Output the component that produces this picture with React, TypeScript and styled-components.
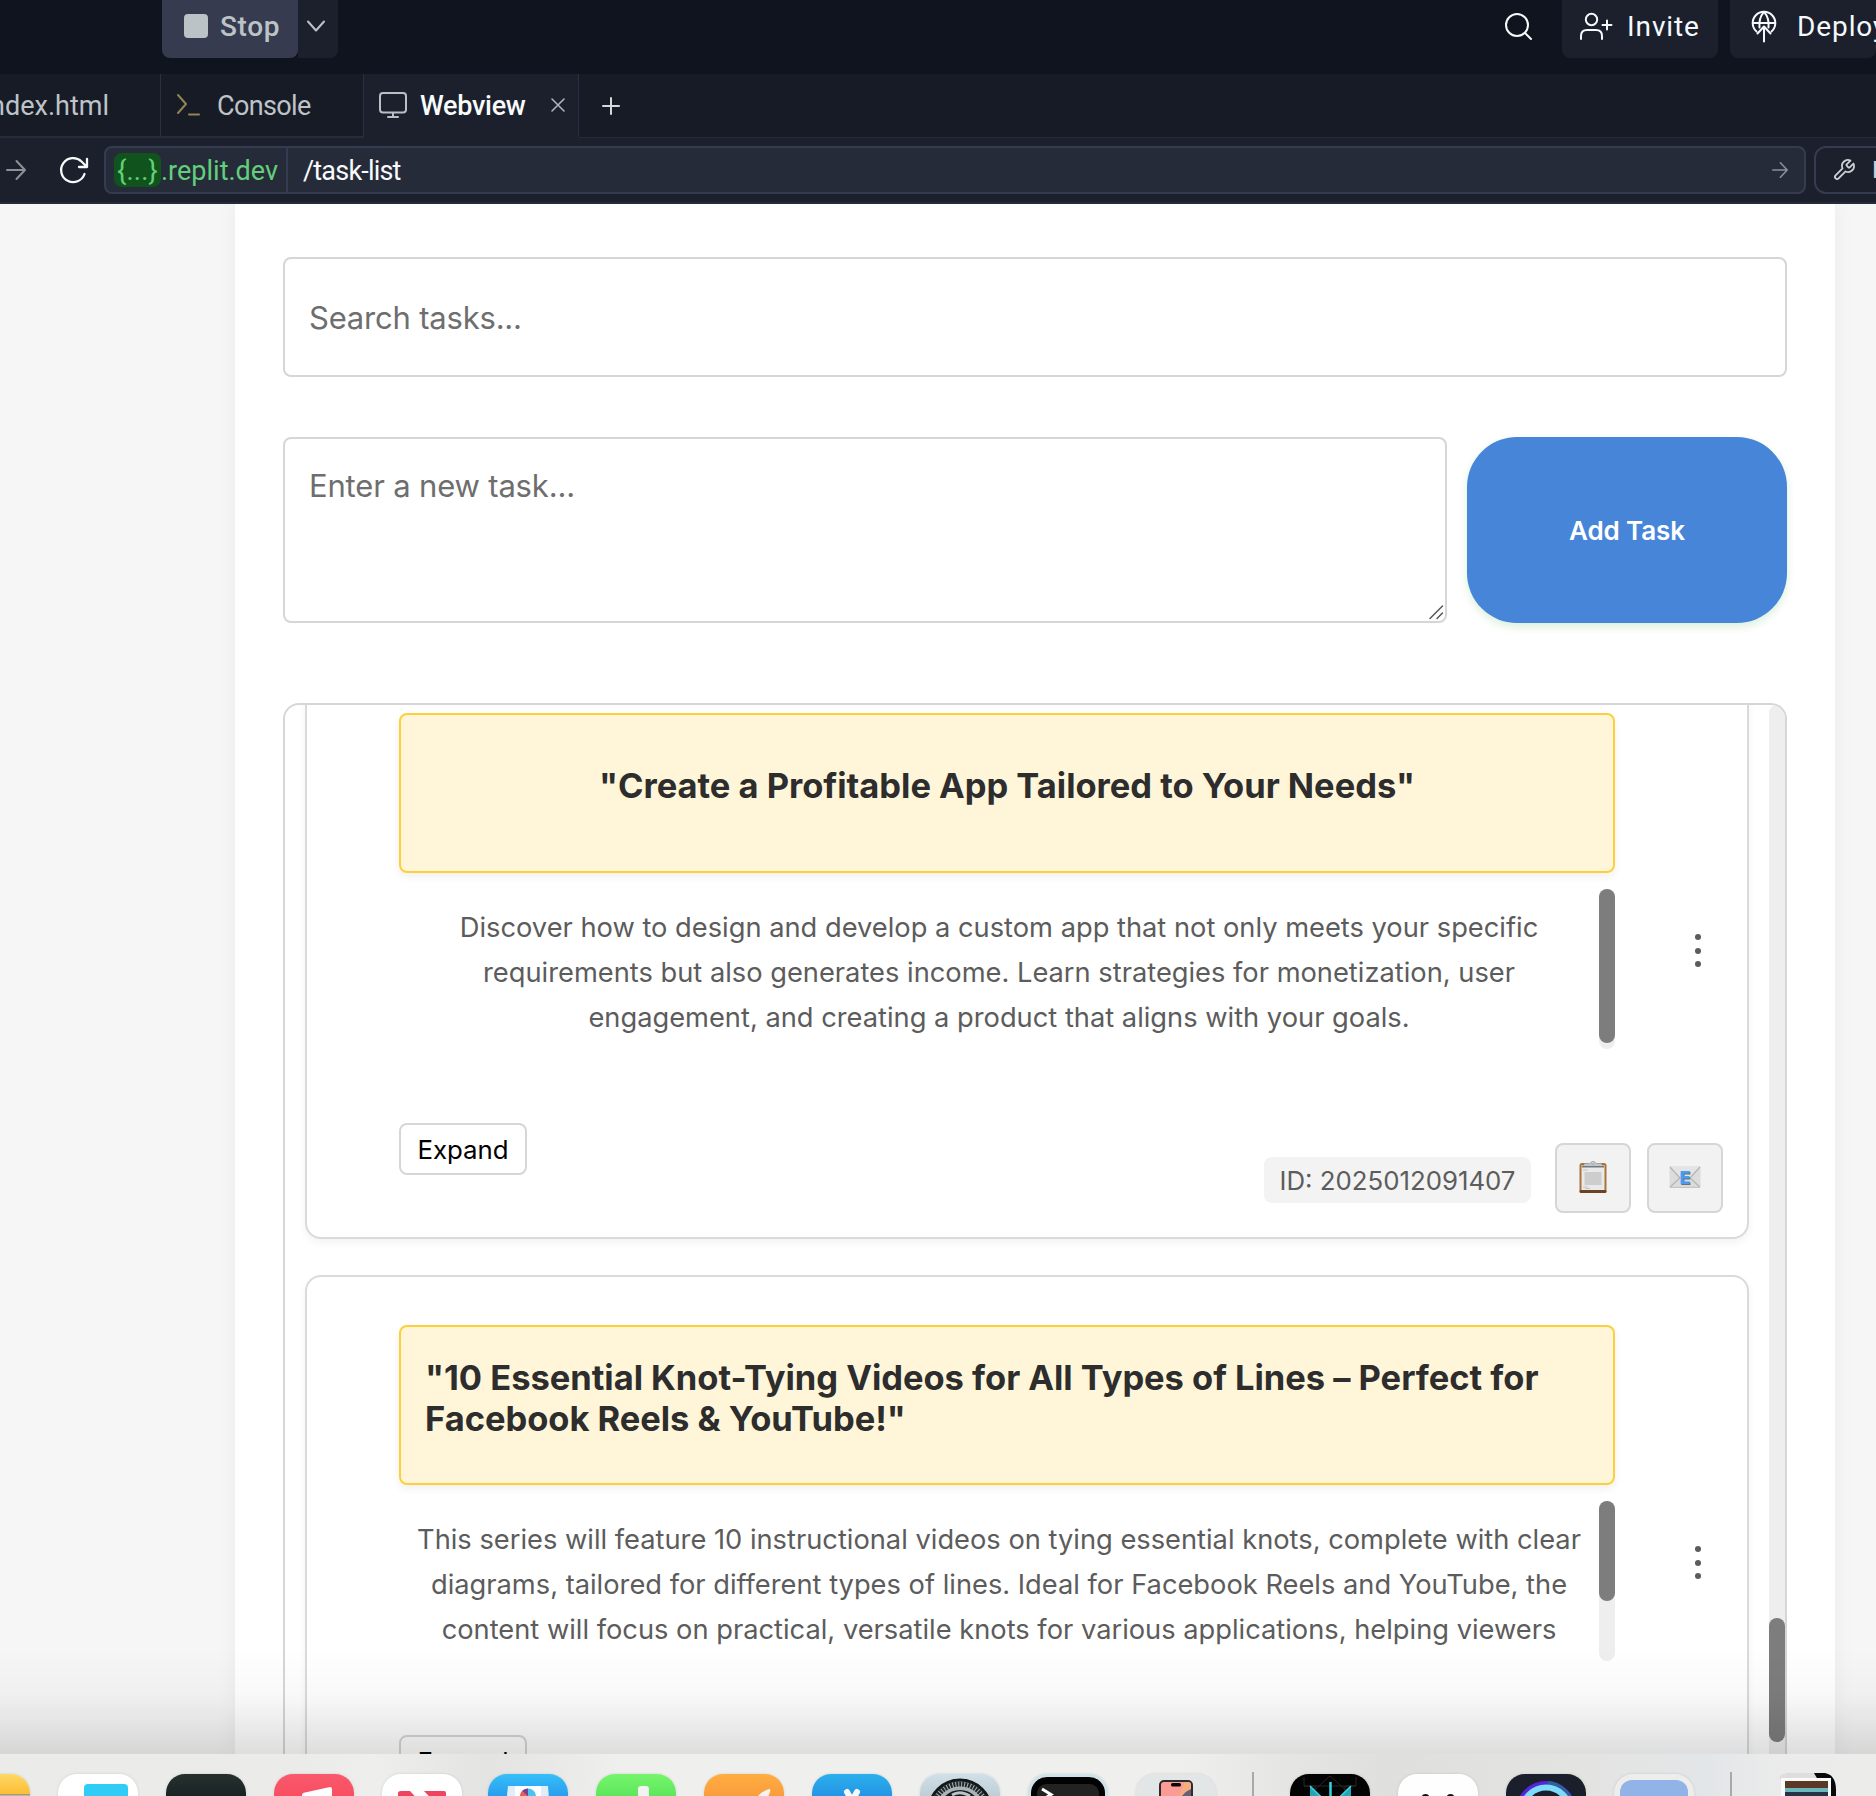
import React from 'react';
import styled, { createGlobalStyle } from 'styled-components';

const ui = '"Inter", "Liberation Sans", sans-serif';
const chrome = '"Roboto", "Noto Sans", sans-serif';

const GlobalStyle = createGlobalStyle`
  * { box-sizing: border-box; }
  body { margin: 0; background: #f6f6f6; overflow: hidden; }
  button, input, textarea { font: inherit; margin: 0; }
  svg { display: block; flex: none; overflow: visible; }
`;

const Screen = styled.div`
  width: 1876px;
  height: 1796px;
  display: flex;
  flex-direction: column;
  overflow: hidden;
  font-family: ${ui};
`;

/* ---------- workspace header ---------- */

const TopBar = styled.header`
  flex: none;
  height: 74px;
  padding-left: 162px;
  display: flex;
  align-items: flex-start;
  background: #10141e;
  color: #f5f9fc;
  font: 400 28px ${chrome};
`;

const StopButton = styled.div`
  width: 136px;
  height: 58px;
  padding: 0 0 6px 22px;
  display: flex;
  align-items: center;
  gap: 12px;
  border-radius: 0 0 8px 8px;
  background: #363b50;
  color: #bcc3c7;
  font-weight: 500;
  letter-spacing: 0.6px;
`;

const StopSquare = styled.span`
  width: 24px;
  height: 24px;
  border-radius: 4px;
  background: #bcc3c7;
`;

const StopMenu = styled.div`
  width: 40px;
  height: 58px;
  padding: 0 0 6px 9px;
  display: flex;
  align-items: center;
  border-radius: 0 0 8px 0;
  background: #1c202c;
  color: #bcc3c7;
`;

const TopActions = styled.div`
  margin-left: auto;
  display: flex;
  gap: 12px;
`;

const SearchAction = styled.div`
  width: 46px;
  height: 52px;
  display: flex;
  align-items: center;
  margin-right: -1px;
`;

const ActionButton = styled.div<{ $width: number }>`
  width: ${(p) => p.$width}px;
  height: 58px;
  padding: 0 0 6px 18px;
  display: flex;
  align-items: center;
  border-radius: 0 0 8px 8px;
  background: #1c202c;
  white-space: nowrap;
  letter-spacing: 0.9px;
`;

const ActionLabel = styled.span<{ $gap: number }>`
  margin-left: ${(p) => p.$gap}px;
`;

const TabStrip = styled.nav`
  flex: none;
  height: 64px;
  display: flex;
  background: #171b26;
  color: #bec3c8;
  font: 400 27px ${chrome};
`;

const Tab = styled.div<{ $width: number; $active?: boolean }>`
  flex: none;
  width: ${(p) => p.$width}px;
  display: flex;
  align-items: center;
  padding-left: 15px;
  border-right: 1px solid #2b3040;
  border-bottom: 2px solid ${(p) => (p.$active ? '#1c202c' : '#262b3a')};
  background: ${(p) => (p.$active ? '#1c202c' : 'transparent')};
  color: ${(p) => (p.$active ? '#f8fafc' : 'inherit')};
`;

const FileTab = styled(Tab)`
  justify-content: flex-end;
  padding: 0 51px 0 0;
`;

const TabLabel = styled.span<{ $spacing?: number; $left?: number; $strong?: boolean }>`
  padding-top: 1px;
  letter-spacing: ${(p) => p.$spacing ?? 0}px;
  margin-left: ${(p) => p.$left ?? 0}px;
  font-weight: ${(p) => (p.$strong ? 500 : 400)};
`;

const CloseSlot = styled.span`
  margin-left: auto;
  padding-right: 13px;
`;

const TabRest = styled.div`
  flex: 1;
  display: flex;
  align-items: center;
  padding-left: 23px;
  border-bottom: 1px solid #262b3a;
`;

const AddressBar = styled.div`
  flex: none;
  height: 66px;
  padding-left: 6px;
  display: flex;
  align-items: center;
  border-bottom: 2px solid #262b3a;
  background: #1c202c;
  font: 400 27px ${chrome};
  color: #f8fafc;
`;

const ReloadSlot = styled.div`
  flex: none;
  width: 45px;
  margin-left: 33px;
`;

const UrlField = styled.div`
  flex: none;
  width: 1702px;
  height: 48px;
  display: flex;
  align-items: center;
  border: 2px solid #353b50;
  border-radius: 8px;
  background: #262b39;
  padding: 0 16px 0 8px;
`;

const HostBadge = styled.span`
  width: 47px;
  height: 34px;
  padding-top: 1px;
  display: grid;
  place-items: center;
  border-radius: 8px;
  background: #11531c;
  color: #62cf7a;
  letter-spacing: 0.2px;
`;

const HostName = styled.span`
  width: 127px;
  padding-top: 2px;
  align-self: stretch;
  display: flex;
  align-items: center;
  border-right: 2px solid #353b50;
  color: #62cf7a;
`;

const UrlPath = styled.span`
  flex: 1;
  padding: 2px 0 0 15px;
  letter-spacing: -0.8px;
`;

const DevtoolsButton = styled.div`
  flex: none;
  width: 200px;
  height: 48px;
  margin-left: 8px;
  padding-left: 17px;
  display: flex;
  align-items: center;
  gap: 17px;
  border: 2px solid #353b50;
  border-radius: 12px;
  color: #cdd1d5;
  font-size: 24px;
`;

/* ---------- web page ---------- */

const Viewport = styled.div`
  flex: 1;
  min-height: 0;
  padding: 0 41px 0 235px;
  overflow: hidden;
  position: relative;
`;

const DockShade = styled.div`
  position: absolute;
  left: 0;
  right: 0;
  bottom: 0;
  height: 106px;
  border-bottom: 1px solid rgba(0, 0, 0, 0.12);
  background: linear-gradient(rgba(0, 0, 0, 0), rgba(0, 0, 0, 0.025) 45%, rgba(0, 0, 0, 0.13));
`;

const Container = styled.main`
  height: 1600px;
  padding: 53px 48px 0;
  background: #fff;
  box-shadow: 0 0 20px rgba(0, 0, 0, 0.05);
`;

const SearchInput = styled.input`
  display: block;
  width: 100%;
  height: 120px;
  padding: 0 24px;
  border: 2px solid #d6d6d6;
  border-radius: 8px;
  background: #fff;
  font-size: 31px;
  letter-spacing: -0.2px;
  outline: none;
  &::placeholder { color: #6e6e6e; }
`;

const NewTaskRow = styled.div`
  display: flex;
  gap: 20px;
  margin: 60px 0 80px;
`;

const TaskField = styled.label`
  flex: 1;
  height: 186px;
  display: flex;
  align-items: flex-end;
  border: 2px solid #d6d6d6;
  border-radius: 8px;
  background: #fff;
`;

const TaskTextarea = styled.textarea`
  flex: 1;
  height: 100%;
  padding: 28px 0 0 24px;
  border: 0;
  background: transparent;
  font-size: 31px;
  letter-spacing: -0.17px;
  line-height: 38px;
  resize: none;
  outline: none;
  &::placeholder { color: #6e6e6e; }
`;

const GripSlot = styled.span`
  margin: 0 2px 2px 0;
`;

const AddButton = styled.button`
  width: 320px;
  height: 186px;
  border: 0;
  border-radius: 50px;
  background: #4785d9;
  color: #fff;
  font-size: 26px;
  font-weight: 600;
  letter-spacing: -0.1px;
  box-shadow: 0 4px 8px rgba(76, 175, 80, 0.2);
`;

const TaskList = styled.section`
  height: 1200px;
  display: flex;
  border: 2px solid #d6d6d6;
  border-radius: 16px;
  overflow: hidden;
`;

const Cards = styled.div`
  flex: 1;
  padding: 0 20px;
  margin-top: -42px;
  display: flex;
  flex-direction: column;
  gap: 36px;
`;

const Track = styled.div<{ $height: number }>`
  flex: none;
  width: 16px;
  height: ${(p) => p.$height}px;
  border-radius: 8px;
  background: #eeeeee;
`;

const Thumb = styled.div<{ $top?: number; $height: number }>`
  height: ${(p) => p.$height}px;
  transform: translateY(${(p) => p.$top ?? 0}px);
  border-radius: 8px;
  background: #7d7d7d;
`;

const Card = styled.article`
  flex: none;
  height: 576px;
  padding: 48px 24px 24px 92px;
  border: 2px solid #dadada;
  border-radius: 16px;
  background: #fff;
  box-shadow: 0 4px 8px rgba(0, 0, 0, 0.05);
`;

const CardBody = styled.div`
  display: flex;
`;

const CardMain = styled.div`
  width: 1216px;
`;

const Title = styled.h3<{ $centered?: boolean }>`
  height: 160px;
  margin: 0 0 16px;
  padding: 0 24px 15px;
  display: flex;
  align-items: center;
  justify-content: ${(p) => (p.$centered ? 'center' : 'flex-start')};
  border: 2px solid #fdd03b;
  border-radius: 8px;
  background: #fff6da;
  box-shadow: 0 4px 8px rgba(0, 0, 0, 0.06);
  color: #2d2d2d;
  font-size: 34.5px;
  font-weight: 700;
  line-height: 41px;
  letter-spacing: -0.03px;
`;

const Description = styled.div`
  display: flex;
  height: 160px;
`;

const DescriptionText = styled.div`
  flex: 1;
  padding-top: 17px;
  overflow: hidden;
`;

const Line = styled.p`
  margin: 0;
  color: #5c5c5c;
  font-size: 27.28px;
  line-height: 44.8px;
  text-align: center;
  white-space: nowrap;
`;

const MenuButton = styled.div`
  width: 41px;
  margin: 221px 0 0 62px;
  height: 33px;
  display: flex;
  flex-direction: column;
  align-items: center;
  justify-content: space-between;
`;

const Dot = styled.span`
  width: 6px;
  height: 6px;
  border-radius: 50%;
  background: #5c5c5c;
`;

const CardFooter = styled.footer`
  margin-top: 74px;
  display: flex;
  align-items: flex-end;
  height: 90px;
`;

const ExpandButton = styled.button`
  align-self: flex-start;
  width: 128px;
  height: 52px;
  padding: 0;
  border: 2px solid #d6d6d6;
  border-radius: 8px;
  background: #fff;
  color: #000;
  font-size: 25.8px;
`;

const TaskId = styled.span`
  width: 267px;
  height: 46px;
  margin: 0 24px 10px auto;
  display: grid;
  place-items: center;
  border-radius: 8px;
  background: #f3f3f3;
  color: #5c5c5c;
  font-size: 25.8px;
`;

const IconButton = styled.button`
  width: 76px;
  height: 70px;
  padding: 0 0 2px;
  display: grid;
  place-items: center;
  border: 2px solid #d6d6d6;
  border-radius: 8px;
  background: #f2f2f2;
  & + & { margin-left: 16px; }
`;

/* ---------- dock ---------- */

const DockBar = styled.footer`
  flex: none;
  height: 42px;
  padding: 20px 0 0;
  display: flex;
  gap: 28px;
  overflow: hidden;
  background: linear-gradient(90deg, #ebebea 0, #ebebea 16%, #eeeeec 20%, #e3e3e1 26%, #efefed 33%, #efefed 63%, #e6e6e5 68%, #dfdfdd 74%, #e3e3e1 84%, #e3e6e8 91%, #ebebeb 95%, #ececeb);
`;

const DockIcon = styled.div<{ $bg: string; $shift?: number }>`
  flex: none;
  width: 80px;
  height: 80px;
  margin-left: ${(p) => p.$shift ?? 0}px;
  border-radius: 19px;
  background: ${(p) => p.$bg};
  box-shadow: 0 0 3px rgba(0, 0, 0, 0.12);
`;

const DockDivider = styled.div`
  flex: none;
  width: 2px;
  height: 60px;
  margin: -2px 8px 0;
  background: #a9a9a9;
`;

const StackSlot = styled.div`
  flex: none;
  margin: -2px 0 0 10px;
`;

const Stroke = ({ w, h, sw = 2, color = 'currentColor', children }: { w: number; h: number; sw?: number; color?: string; children: React.ReactNode }) => (
  <svg width={w} height={h} viewBox={`0 0 ${w} ${h}`} fill="none" stroke={color} strokeWidth={sw} strokeLinecap="round" strokeLinejoin="round">
    {children}
  </svg>
);

const ArrowRight = ({ size, color }: { size: number; color: string }) => (
  <svg width={size} height={size} viewBox="0 0 20 20" fill="none" stroke={color} strokeWidth="2" strokeLinecap="round" strokeLinejoin="round">
    <path d="M1 10H19M10.5 1L19 10L10.5 19" />
  </svg>
);

const ClipboardIcon = () => (
  <svg width="28" height="34" viewBox="0 0 28 34">
    <rect x="0.5" y="3" width="27" height="30" rx="2.5" fill="#a8743a" />
    <rect x="0.5" y="30" width="27" height="3" rx="1.5" fill="#6d4222" />
    <path d="M2.500 5H25.500V30H2.500Z" fill="#e9e9e9" />
    <path d="M3 5.500H25V7.500H3Z" fill="#77797c" />
    <rect x="5.500" y="12" width="17" height="13" fill="#cdcdcd" />
    <path d="M4 10H9M4 27H9M6 28.500H11" stroke="#c6c6c6" strokeWidth="1" />
    <path d="M5 6V4.500Q5 3.500 6.500 3.500H10Q11 1 14 1Q17 1 18 3.500H21.500Q23 3.500 23 4.500V6Z" fill="#bcc4cc" />
    <circle cx="14" cy="2.800" r="1.300" fill="#f2f2f2" stroke="#8f979f" strokeWidth="0.800" />
  </svg>
);

const MailIcon = () => (
  <svg width="32" height="22" viewBox="0 0 32 22">
    <rect x="0.5" y="0.5" width="31" height="21" rx="1" fill="#dcdcdc" />
    <path d="M0.500 0.500H31.500L18 14H14Z" fill="#e4e4e4" />
    <path d="M1 1L11 12L1 21M31 1L21 12L31 21" fill="none" stroke="#b4b4b4" strokeWidth="1.200" />
    <path d="M1 21.300H31" stroke="#bdbdbd" strokeWidth="1" />
    <text x="16.700" y="18.600" textAnchor="middle" fontFamily="Inter, sans-serif" fontWeight="800" fontSize="18" fill="#6f6f6f">E</text>
    <text x="15.900" y="17.600" textAnchor="middle" fontFamily="Inter, sans-serif" fontWeight="800" fontSize="18" fill="#4a9bf2">E</text>
  </svg>
);

type Task = { title: string[]; centered?: boolean; lines: string[]; id: string; thumb: number };

const tasks: Task[] = [
  {
    title: ['"Create a Profitable App Tailored to Your Needs"'],
    centered: true,
    lines: [
      'Discover how to design and develop a custom app that not only meets your specific',
      'requirements but also generates income. Learn strategies for monetization, user',
      'engagement, and creating a product that aligns with your goals.',
    ],
    id: '2025012091407',
    thumb: 154,
  },
  {
    title: ['"10 Essential Knot-Tying Videos for All Types of Lines – Perfect for', 'Facebook Reels & YouTube!"'],
    lines: [
      'This series will feature 10 instructional videos on tying essential knots, complete with clear',
      'diagrams, tailored for different types of lines. Ideal for Facebook Reels and YouTube, the',
      'content will focus on practical, versatile knots for various applications, helping viewers',
    ],
    id: '',
    thumb: 100,
  },
];

const TaskCard = ({ task }: { task: Task }) => (
  <Card>
    <CardBody>
      <CardMain>
        <Title $centered={task.centered}>
          <span>
            {task.title.map((t, i) => (
              <React.Fragment key={t}>{i > 0 && <br />}{t}</React.Fragment>
            ))}
          </span>
        </Title>
        <Description>
          <DescriptionText>
            {task.lines.map((l) => <Line key={l}>{l}</Line>)}
          </DescriptionText>
          <Track $height={160}><Thumb $height={task.thumb} /></Track>
        </Description>
      </CardMain>
      <MenuButton><Dot /><Dot /><Dot /></MenuButton>
    </CardBody>
    <CardFooter>
      <ExpandButton>Expand</ExpandButton>
      {task.id && (
        <>
          <TaskId>ID: {task.id}</TaskId>
          <IconButton><ClipboardIcon /></IconButton>
          <IconButton><MailIcon /></IconButton>
        </>
      )}
    </CardFooter>
  </Card>
);

const Header = () => (
  <TopBar>
    <StopButton>
      <StopSquare />
      Stop
    </StopButton>
    <StopMenu>
      <Stroke w={18} h={10}><path d="M1 0.500L9 9.500L17 0.500" /></Stroke>
    </StopMenu>
    <TopActions>
      <SearchAction>
        <Stroke w={27} h={27}>
          <circle cx="12" cy="12" r="11" /><path d="M20 20L26 26" />
        </Stroke>
      </SearchAction>
      <ActionButton $width={156}>
        <Stroke w={32} h={27}>
          <circle cx="11.500" cy="6.500" r="5.700" />
          <path d="M1 26V23Q1 17 7 17H16Q22 17 22 23V26M27 7.500V16.500M22.500 12H31.500" />
        </Stroke>
        <ActionLabel $gap={15}>Invite</ActionLabel>
      </ActionButton>
      <ActionButton $width={146}>
        <Stroke w={32} h={32}>
          <path d="M8.500 21.500A11.300 11.300 0 1 1 23.500 21.500" />
          <path d="M5 13H27M11.500 17.500Q10.500 8 16 1.800Q21.500 8 20.500 17.500" />
          <path d="M16 31.500V17M9.500 23.500L16 16.500L22.500 23.500" />
        </Stroke>
        <ActionLabel $gap={17}>Deploy</ActionLabel>
      </ActionButton>
    </TopActions>
  </TopBar>
);

const Tabs = () => (
  <TabStrip>
    <FileTab $width={161}><TabLabel>index.html</TabLabel></FileTab>
    <Tab $width={203}>
      <Stroke w={24} h={22} color="#948450"><path d="M2 1L10 10L2 19M13 20.500H23" /></Stroke>
      <TabLabel $left={17} $spacing={-0.65}>Console</TabLabel>
    </Tab>
    <Tab $width={215} $active>
      <Stroke w={28} h={26} color="#b9bfc4">
        <rect x="1" y="1" width="26" height="19.500" rx="3" /><path d="M14 21V25M9 25H19" />
      </Stroke>
      <TabLabel $left={13} $spacing={-0.3} $strong>Webview</TabLabel>
      <CloseSlot>
        <Stroke w={14} h={14} color="#aeb3b9" sw={1.6}><path d="M1 1L13 13M13 1L1 13" /></Stroke>
      </CloseSlot>
    </Tab>
    <TabRest>
      <Stroke w={18} h={18} color="#d5d9dc"><path d="M9 1V17M1 9H17" /></Stroke>
    </TabRest>
  </TabStrip>
);

const Address = () => (
  <AddressBar>
    <ArrowRight size={20} color="#8d9096" />
    <ReloadSlot>
      <Stroke w={29} h={26} sw={2.3}>
        <path d="M25.500 17A12 12 0 1 1 22.500 4.500L28 10M28 2V10H20" />
      </Stroke>
    </ReloadSlot>
    <UrlField>
      <HostBadge>{'{...}'}</HostBadge>
      <HostName>.replit.dev</HostName>
      <UrlPath>/task-list</UrlPath>
      <ArrowRight size={16} color="#8d9096" />
    </UrlField>
    <DevtoolsButton>
      <svg width="22" height="22" viewBox="1 1 22 22" fill="none" stroke="currentColor" strokeWidth="1.800" strokeLinecap="round" strokeLinejoin="round">
        <path d="M14.700 6.300a1 1 0 0 0 0 1.400l1.600 1.600a1 1 0 0 0 1.400 0l3.770-3.770a6 6 0 0 1-7.940 7.940l-6.910 6.910a2.120 2.120 0 0 1-3-3l6.910-6.910a6 6 0 0 1 7.940-7.940l-3.760 3.760z" />
      </svg>
      Devtools
    </DevtoolsButton>
  </AddressBar>
);

const Dock = () => (
  <DockBar>
    <DockIcon $shift={-50} $bg="linear-gradient(#fdd964 0, #fcbd35 20px, #9b8b70 20px, #c9c1ae 22px, #fff 23px)" />
    <DockIcon $bg="#fff">
      <svg width="80" height="80"><rect x="26" y="10" width="44" height="40" rx="4" fill="#2fcdf6" /></svg>
    </DockIcon>
    <DockIcon $bg="linear-gradient(#26312e, #192123 24px)" />
    <DockIcon $bg="linear-gradient(#f9596c, #f94459 40px)">
      <svg width="80" height="80"><path d="M28 21Q28 19 31 18.500L56 13Q58 13 58 15V50H28Z" fill="#fff" /></svg>
    </DockIcon>
    <DockIcon $bg="#fff">
      <svg width="80" height="80" fill="#f0435f"><path d="M16 19Q16 17 19 17H28L60 52H16Z" /><path d="M42 17H62Q64 17 64 19V40Z" /></svg>
    </DockIcon>
    <DockIcon $shift={-2} $bg="linear-gradient(#35bff8, #2897ee 26px)">
      <svg width="80" height="80">
        <path d="M20 12H60L63 50H16Z" fill="#dfeefa" />
        <path d="M27 12H53V50H27Z" fill="#fff" />
        <circle cx="40" cy="22.500" r="8" fill="#4ac4ee" />
        <path d="M40 22.500V14.500A8 8 0 0 0 34 17Z" fill="#7b3f8d" />
        <path d="M40 22.500L34 17A8 8 0 0 0 32 22.500Z" fill="#ee5b4d" />
      </svg>
    </DockIcon>
    <DockIcon $bg="linear-gradient(#76f56c, #58e459 26px)">
      <svg width="80" height="80"><rect x="42" y="12" width="11" height="40" rx="3" fill="#f1f4f1" /></svg>
    </DockIcon>
    <DockIcon $bg="linear-gradient(#ffad42, #f99a3b 26px)">
      <svg width="80" height="80"><path d="M50 28Q55 18 65 15Q67 15 66 18Q64 24 59 30Z" fill="#f7f4ef" /></svg>
    </DockIcon>
    <DockIcon $bg="linear-gradient(#2bb0ec, #248fe4 26px)">
      <svg width="80" height="80" stroke="#f4f9fd" strokeWidth="6" strokeLinecap="round"><path d="M35 18L49 43M45 18L31 43" /></svg>
    </DockIcon>
    <DockIcon $bg="linear-gradient(#cfe0e8, #bccbd2 26px)">
      <svg width="80" height="80" fill="none">
        <circle cx="40" cy="37" r="31" fill="#aab4b8" stroke="#15181a" strokeWidth="3" />
        <circle cx="40" cy="37" r="27" stroke="#20272a" strokeWidth="5" strokeDasharray="2 1" />
        <circle cx="40" cy="37" r="21" fill="#15191b" />
        <path d="M32 21Q40 16 50 22" stroke="#b9c5ca" strokeWidth="3" />
      </svg>
    </DockIcon>
    <DockIcon $bg="#cfe3ea">
      <svg width="80" height="80">
        <rect x="3" y="3" width="74" height="74" rx="16" fill="#020202" />
        <rect x="9" y="10" width="62" height="60" rx="9" fill="#222" />
        <path d="M14 15L23 20.500L14 26" fill="none" stroke="#fff" strokeWidth="3" />
      </svg>
    </DockIcon>
    <DockIcon $bg="#e3e6e7">
      <svg width="80" height="80">
        <rect x="23" y="6" width="34" height="66" rx="5" fill="#2e2a2d" />
        <rect x="25" y="8" width="30" height="62" rx="3" fill="#fb9b95" />
        <path d="M49 8H52Q55 8 55 11V19L40 29Z" fill="#f7ae7e" />
        <path d="M55 15Q45 19 41 32H55Z" fill="#675f73" />
        <rect x="35" y="9" width="10" height="3.500" rx="1.500" fill="#080808" />
      </svg>
    </DockIcon>
    <DockDivider />
    <DockIcon $bg="#030303">
      <svg width="80" height="80" fill="none">
        <path d="M14 3V12H66V3M14 12H25V30M66 12H55V30M40 2L22 18M40 2L58 18" stroke="#262626" />
        <path d="M20 12L38 28V40H20ZM61 12L43 28V40H61Z" fill="#25a6b6" />
        <path d="M40.500 8V40" stroke="#35d4e2" strokeWidth="2.500" />
        <path d="M20 12L38 30M61 12L43 30" stroke="#35d4e2" strokeWidth="1.500" />
      </svg>
    </DockIcon>
    <DockIcon $bg="#fefefe">
      <svg width="80" height="80"><circle cx="27.500" cy="24" r="4" fill="#111" /><circle cx="52.500" cy="24" r="4" fill="#111" /></svg>
    </DockIcon>
    <DockIcon $bg="#1b1f2b">
      <svg width="80" height="80" fill="none">
        <circle cx="40" cy="37" r="28" stroke="#5525d8" strokeWidth="4" />
        <path d="M42 9A28 28 0 0 1 67 31" stroke="#315f9e" strokeWidth="4" />
        <circle cx="40" cy="37" r="23.500" stroke="#7ddcfa" strokeWidth="6" />
      </svg>
    </DockIcon>
    <DockIcon $bg="#ededec">
      <svg width="80" height="80"><rect x="6" y="6" width="68" height="68" rx="12" fill="#91b3e8" /></svg>
    </DockIcon>
    <DockDivider />
    <StackSlot>
      <svg width="60" height="60">
        <path d="M10 1H47Q58 3 58 18V50H10Z" fill="#080808" />
        <path d="M2 4Q4 1 12 1H36L40 8H2Z" fill="#dedede" />
        <rect x="3" y="6" width="50" height="50" fill="#fafafa" />
        <rect x="7" y="9" width="43" height="8" fill="#5b3a25" />
        <rect x="7" y="16" width="43" height="4" fill="#6bb7bd" />
        <rect x="7" y="20" width="43" height="30" fill="#293244" />
      </svg>
    </StackSlot>
  </DockBar>
);

export default function App() {
  return (
    <Screen>
      <GlobalStyle />
      <Header />
      <Tabs />
      <Address />
      <Viewport>
        <Container>
          <SearchInput placeholder="Search tasks..." />
          <NewTaskRow>
            <TaskField>
              <TaskTextarea placeholder="Enter a new task..." />
              <GripSlot>
                <Stroke w={14} h={14} sw={1.5} color="#555"><path d="M1 13.500L13.500 1M8 13.500L13.500 8" /></Stroke>
              </GripSlot>
            </TaskField>
            <AddButton>Add Task</AddButton>
          </NewTaskRow>
          <TaskList>
            <Cards>
              {tasks.map((t) => <TaskCard key={t.title[0]} task={t} />)}
            </Cards>
            <Track $height={1200}><Thumb $top={913} $height={124} /></Track>
          </TaskList>
        </Container>
        <DockShade />
      </Viewport>
      <Dock />
    </Screen>
  );
}
